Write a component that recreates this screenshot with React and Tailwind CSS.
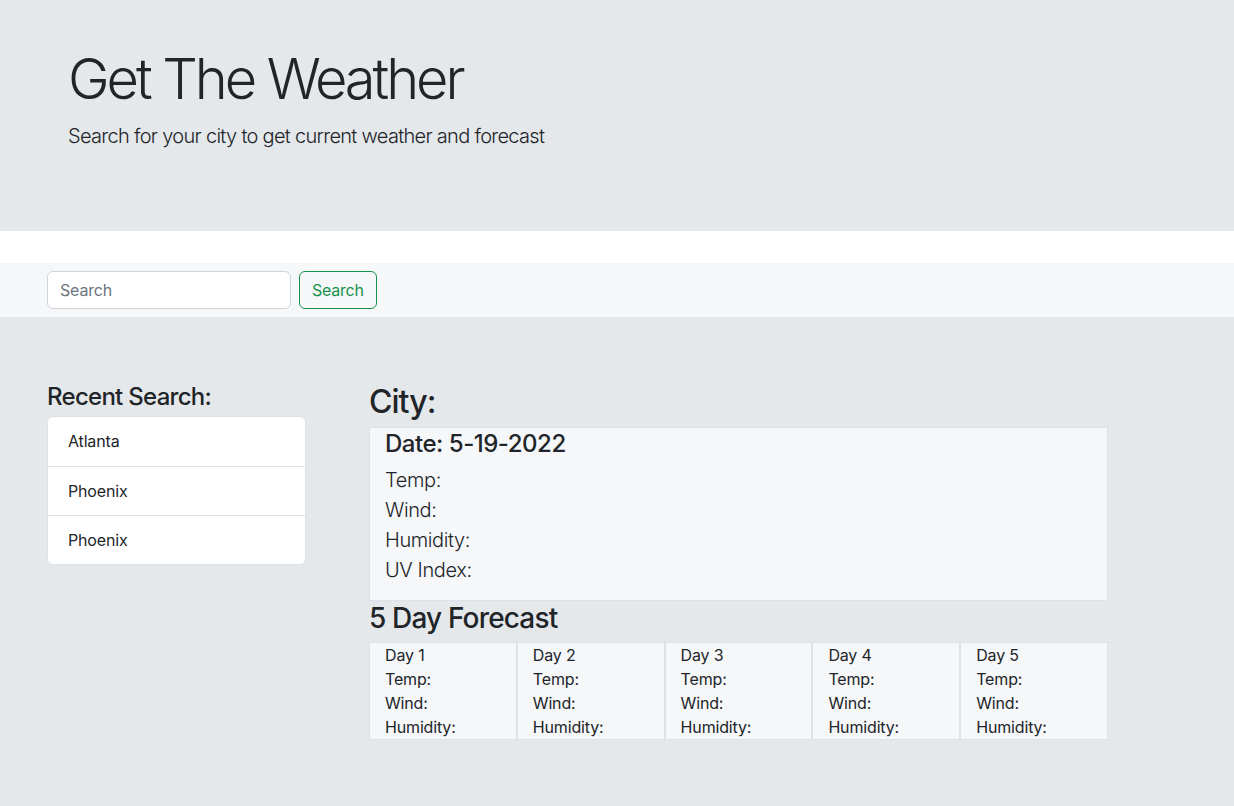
const FONT = { fontFamily: 'Inter, "Noto Sans", sans-serif' };

const recent = ['Atlanta', 'Phoenix', 'Phoenix'];
const days = ['Day 1', 'Day 2', 'Day 3', 'Day 4', 'Day 5'];

export default function App() {
    return (
        <div style={FONT} className="min-h-[806px] bg-[#e5e8eb] text-[#212529]">
            <header className="h-[231px] bg-[#e5e8eb] pl-[68px] pt-[46px]">
                <h1 className="text-[56px] font-light leading-[1.2] tracking-[-0.055em] mb-[8px]">Get The Weather</h1>
                <p className="text-[20px] font-light leading-[30px] tracking-[-0.035em]">Search for your city to get current weather and forecast</p>
            </header>

            <div className="h-[32px] bg-white" />

            <nav className="h-[54px] bg-[#f6f7f9] flex items-center gap-2 px-[47px]">
                <input
                    type="text"
                    placeholder="Search"
                    className="w-[244px] h-[38px] rounded-[6px] border border-[#ced4da] bg-white px-3 text-base tracking-[-0.01em] placeholder:text-[#6c757d] outline-none"
                />
                <button className="h-[38px] rounded-[6px] border border-[#15924a] px-3 text-base tracking-[-0.015em] text-[#15924a]">Search</button>
            </nav>

            <main className="flex gap-[63px] px-[47px] pt-[66px] pb-16">
                <aside className="w-[259px]">
                    <h4 className="text-[24px] font-medium leading-[1.2] tracking-[-0.03em] mb-[4px]">Recent Search:</h4>
                    <ul className="rounded-[6px] border border-[#dee2e6] bg-white overflow-hidden">
                        {recent.map((city, i) => (
                            <li key={i} className={`h-[49px] flex items-center px-[20px] text-base tracking-[-0.01em] ${i > 0 ? 'border-t border-[#dee2e6]' : ''}`}>{city}</li>
                        ))}
                    </ul>
                </aside>

                <section className="w-[739px]">
                    <h2 className="text-[32px] font-medium leading-[1.2] tracking-[-0.03em] mb-[6px]">City:</h2>
                    <div className="h-[174px] border border-[#dee2e6] bg-[#f6f7f9] px-[15px] pt-[2px]">
                        <h4 className="text-[24px] font-medium leading-[1.2] tracking-[-0.02em] mb-[6px]">Date: 5-19-2022</h4>
                        <p className="text-[20px] font-light leading-[30px] tracking-[-0.02em]">Temp:</p>
                        <p className="text-[20px] font-light leading-[30px] tracking-[-0.02em]">Wind:</p>
                        <p className="text-[20px] font-light leading-[30px] tracking-[-0.02em]">Humidity:</p>
                        <p className="text-[20px] font-light leading-[30px] tracking-[-0.02em]">UV Index:</p>
                    </div>
                    <h3 className="text-[28px] font-medium leading-[1.2] tracking-[-0.03em] mt-[1px] mb-[6px]">5 Day Forecast</h3>
                    <div className="flex">
                        {days.map(d => (
                            <div key={d} className="w-[148px] h-[98px] border border-[#dee2e6] bg-[#f6f7f9] px-[15px] text-base leading-[24px] tracking-[-0.01em]">
                                <p>{d}</p>
                                <p>Temp:</p>
                                <p>Wind:</p>
                                <p>Humidity:</p>
                            </div>
                        ))}
                    </div>
                </section>
            </main>
        </div>
    );
}
